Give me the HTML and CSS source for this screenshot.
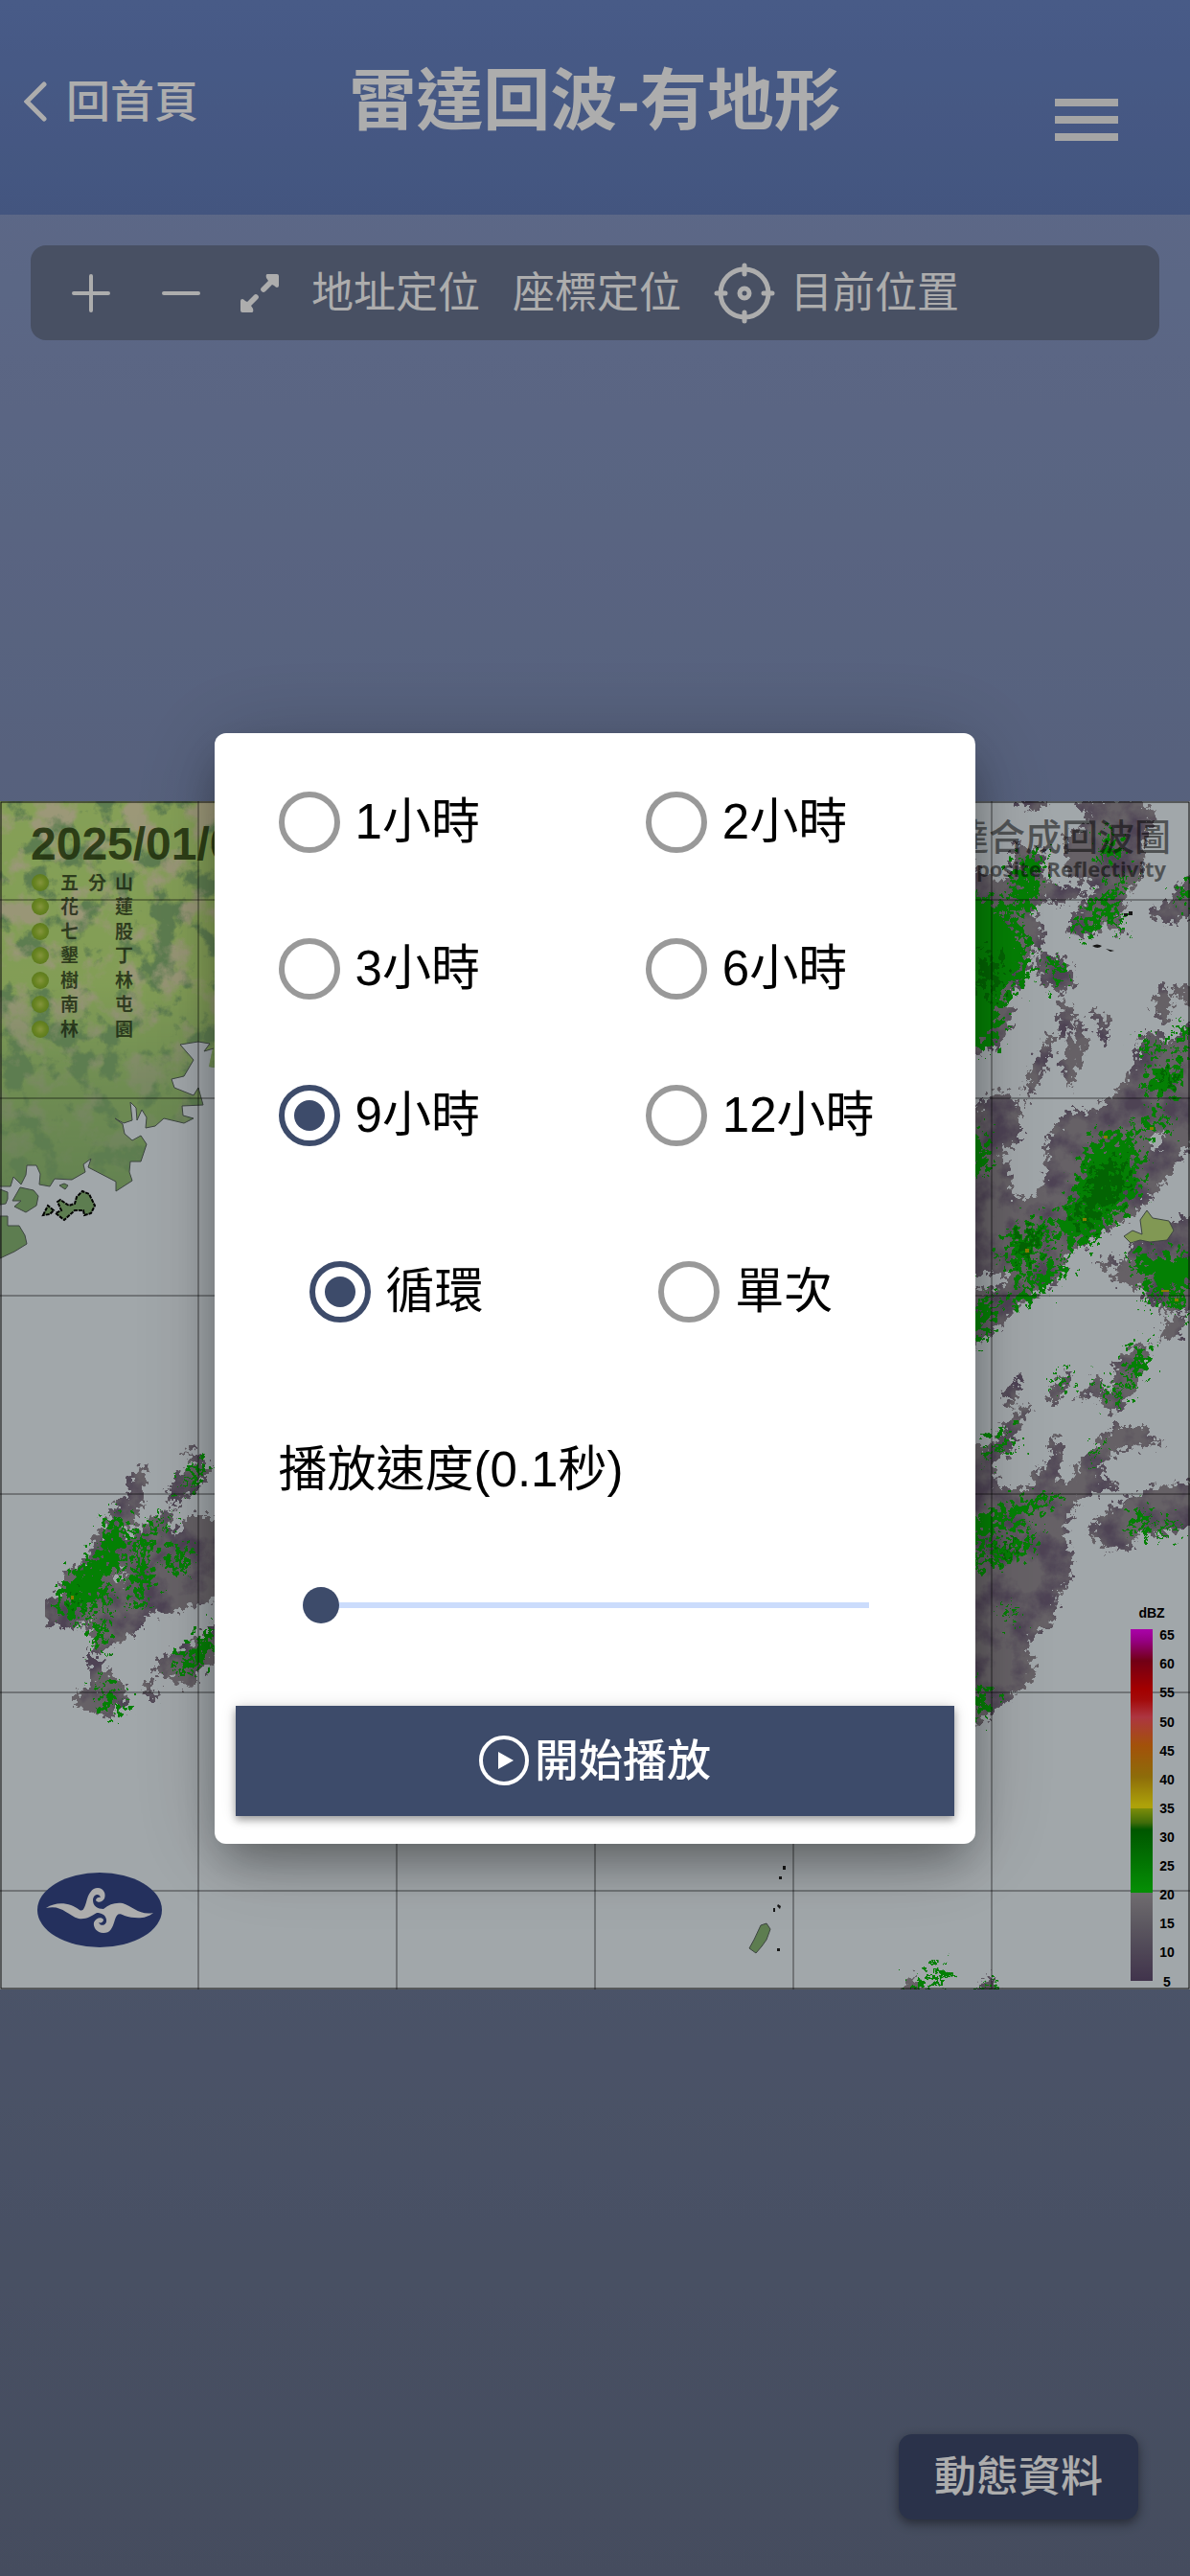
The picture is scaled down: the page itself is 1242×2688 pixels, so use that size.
FILE: index.html
```html
<!DOCTYPE html>
<html lang="zh-Hant">
<head>
<meta charset="utf-8">
<meta name="viewport" content="width=device-width, initial-scale=1">
<title>雷達回波-有地形</title>
<link rel="stylesheet" href="styles.css">
</head>
<body>
<div class="app">
  <header class="header">
    <a class="back" href="#">
      <svg class="back-icon" viewBox="0 0 24 42" aria-hidden="true"><path d="M21 3 3 21l18 18"/></svg>
      <span>回首頁</span>
    </a>
    <h1 class="title">雷達回波-有地形</h1>
    <button class="menu" type="button" aria-label="選單"><span></span><span></span><span></span></button>
  </header>

  <main class="main">
    <div class="toolbar">
      <button class="tool tool-zoom" type="button" aria-label="放大"><svg class="icon" viewBox="0 0 40 40"><path d="M2 20h36M20 2v36"/></svg></button>
      <button class="tool tool-zoom" type="button" aria-label="縮小"><svg class="icon" viewBox="0 0 40 40"><path d="M2 20h36"/></svg></button>
      <button class="tool tool-expand" type="button" aria-label="全圖">
        <svg class="icon icon-solid" viewBox="0 0 40 40"><path d="M28 0h10q2 0 2 2v10q0 2-2 2-1 0-3-2l-2-1-7 7q-2 2-4 0t0-4l7-7-2-3q-1-4 1-4zM12 40H2q-2 0-2-2V28q0-2 2-2 1 0 3 2l2 1 7-7q2-2 4 0t0 4l-7 7 2 3q1 4-1 4z"/></svg>
      </button>
      <button class="tool" type="button">地址定位</button>
      <button class="tool" type="button">座標定位</button>
      <button class="tool tool-locate" type="button">
        <svg class="icon-target" viewBox="0 0 64 64" aria-hidden="true"><circle cx="32" cy="32" r="25"/><circle cx="32" cy="32" r="5"/><path d="M32 3v9M32 52v9M3 32h9M52 32h9"/></svg>
        <span>目前位置</span>
      </button>
    </div>

    <svg class="map" viewBox="0 835 1242 1240" role="img" aria-label="雷達回波圖">
      <defs>
        <filter id="edge" x="-5%" y="-5%" width="110%" height="110%" color-interpolation-filters="sRGB">
          <feTurbulence type="fractalNoise" baseFrequency=".16" numOctaves="3" seed="4" result="n"/>
          <feDisplacementMap in="SourceGraphic" in2="n" scale="24" xChannelSelector="R" yChannelSelector="G"/>
        </filter>
        <filter id="speckle" x="-5%" y="-5%" width="110%" height="110%" color-interpolation-filters="sRGB">
          <feTurbulence type="fractalNoise" baseFrequency=".14" numOctaves="3" seed="9" result="n"/>
          <feDisplacementMap in="SourceGraphic" in2="n" scale="56" xChannelSelector="R" yChannelSelector="G"/>
        </filter>
        <filter id="shade" x="0" y="0" width="100%" height="100%" color-interpolation-filters="sRGB">
          <feTurbulence type="fractalNoise" baseFrequency=".035" numOctaves="5" seed="6"/>
          <feColorMatrix values="0 0 0 0 .45  0 0 0 0 .39  0 0 0 0 .49  3 0 0 0 -1.2" result="t"/>
          <feComposite in="t" in2="SourceGraphic" operator="in" result="c"/>
          <feMerge><feMergeNode in="SourceGraphic"/><feMergeNode in="c"/></feMerge>
        </filter>
        <filter id="hills" x="0" y="0" width="100%" height="100%" color-interpolation-filters="sRGB">
          <feTurbulence type="fractalNoise" baseFrequency=".032" numOctaves="6" seed="12"/>
          <feColorMatrix values="0 0 0 0 .77  0 0 0 0 .92  0 0 0 0 .5  8 0 0 0 -2.9"/>
        </filter>
        <filter id="peaks" x="0" y="0" width="100%" height="100%" color-interpolation-filters="sRGB">
          <feTurbulence type="fractalNoise" baseFrequency=".03" numOctaves="6" seed="31"/>
          <feColorMatrix values="0 0 0 0 .9  0 0 0 0 .88  0 0 0 0 .7  5 0 0 0 -2.5"/>
        </filter>
        <linearGradient id="fade" x1="0" y1="0" x2="0" y2="1">
          <stop offset="0" stop-color="#fff"/><stop offset=".45" stop-color="#eee"/><stop offset=".7" stop-color="#777"/><stop offset="1" stop-color="#222"/>
        </linearGradient>
        <mask id="height"><rect x="0" y="835" width="230" height="420" fill="url(#fade)"/></mask>
        <clipPath id="coast"><path d="M0 835H300V1113H222L218 1112 222 1093 213 1096 219 1088 207 1086 188 1089 202 1105 192 1122 179 1125 182 1134 202 1142 207 1134 212 1152 190 1153 191 1163 202 1166 192 1171 171 1166 162 1174 152 1176 153 1165 148 1157 143 1168 142 1155 136 1149 138 1168 129 1171 120 1166 128 1172 130 1182 138 1189 147 1184 153 1193 147 1211 136 1211 135 1222 138 1231 121 1242 121 1232 92 1217 95 1208 87 1214 89 1222 75 1230 57 1229 52 1237 41 1235 42 1224 38 1215 28 1215 27 1225 22 1235 14 1227 11 1237 0 1237Z"/></clipPath>
        <radialGradient id="station"><stop offset="0" stop-color="#c4dc5c"/><stop offset=".6" stop-color="#9cc434"/><stop offset="1" stop-color="#8ab62c"/></radialGradient>
        <linearGradient id="dbz" x1="0" y1="0" x2="0" y2="1">
          <stop offset="0" stop-color="#fb05fb"/><stop offset=".03" stop-color="#e000c8"/><stop offset=".09" stop-color="#a80020"/><stop offset=".17" stop-color="#f00000"/><stop offset=".2" stop-color="#f01010"/><stop offset=".25" stop-color="#ff5060"/><stop offset=".33" stop-color="#f07810"/><stop offset=".42" stop-color="#d0a010"/><stop offset=".5" stop-color="#ffee10"/><stop offset=".51" stop-color="#ffee10"/><stop offset=".51" stop-color="#b8d010"/><stop offset=".55" stop-color="#60a010"/><stop offset=".57" stop-color="#008000"/><stop offset=".75" stop-color="#08d408"/><stop offset=".75" stop-color="#a4a0a4"/><stop offset=".87" stop-color="#807888"/><stop offset="1" stop-color="#604c70"/>
        </linearGradient>
      </defs>

      <rect class="sea" x="0" y="835" width="1242" height="1240"/>

      <g clip-path="url(#coast)">
        <rect class="land" x="0" y="835" width="300" height="420"/>
        <g mask="url(#height)">
          <rect x="0" y="835" width="230" height="420" filter="url(#hills)"/>
          <rect x="0" y="835" width="230" height="420" filter="url(#peaks)"/>
        </g>
      </g>
      <path class="shore" d="M223 1093 213 1096 219 1088 207 1086 188 1089 202 1105 192 1122 179 1125 182 1134 202 1142 207 1134 212 1152 190 1153 191 1163 202 1166 192 1171 171 1166 162 1174 152 1176 153 1165 148 1157 143 1168 142 1155 136 1149 138 1168 129 1171 120 1166 128 1172 130 1182 138 1189 147 1184 153 1193 147 1211 136 1211 135 1222 138 1231 121 1242 121 1232 92 1217 95 1208 87 1214 89 1222 75 1230 57 1229 52 1237 41 1235 42 1224 38 1215 28 1215 27 1225 22 1235 14 1227 11 1237 0 1237"/>
      <path class="shore land" d="M0 1240l8 3v7l-2 5-6 1zM13 1252l8-14 14 3 5 6-2 10-11 7-12-6 7-6zM0 1268h8v10h12l6 10 2 9-13 8-15 7zM62 1236l5-2 4 2-3 4z"/>
      <path class="island land" d="M60 1253l3-2 9 6 6-2 2-7 6-6 7 3 6 12-4 8-7 2-1-5h-9l-11 10-9-7 6-3zM45 1267l5-10 6 5-4 4z"/>

      <g class="echo" filter="url(#shade)"><g filter="url(#edge)">
        <path d="M150 1533L138 1541 138 1559 125 1567 107 1600 88 1633 67 1644 67 1666 47 1670 48 1689 70 1696 95 1687 98 1713 103 1722 127 1708 143 1699 157 1675 173 1682 203 1670 240 1659V1584H197L177 1611 175 1595 177 1578 157 1585 133 1609 130 1623 137 1680 126 1651 113 1647 128 1628 127 1590 137 1588 147 1562Z"/>
        <path d="M195 1510L210 1522 200 1529 178 1552 180 1566 200 1555 213 1538 213 1524 205 1518ZM165 1732L200 1717 240 1685V1717L200 1743V1757L180 1750 165 1743ZM90 1725L108 1741 127 1760 128 1776 115 1786 83 1779V1765L100 1760 98 1739ZM152 1757h4l5 14h-4z"/>
        <path d="M1127 835L1187 835 1202 851 1190 877 1192 908 1180 923 1167 946 1168 969 1153 960 1140 973 1119 971 1122 958 1150 923 1117 912 1113 874 1143 858ZM1090 920L1127 931 1107 939 1087 933ZM1062 835h28l-8 8z"/>
        <path d="M1000 895L1043 923 1060 912V885L1085 889 1088 912 1087 935 1075 950 1088 977 1072 992 1068 1019 1050 1038 1053 1065 1040 1088 1000 1100ZM1085 996L1110 1002 1120 1019 1110 1032 1088 1023ZM1097 1080L1090 1111 1080 1130 1072 1145 1075 1122ZM1127 1070L1132 1088 1117 1126 1110 1107ZM1110 1045L1120 1061 1108 1082ZM1138 1054l16 8-2 24-4-18z"/>
        <path fill-rule="evenodd" d="M1000 1174L1043 1138 1063 1153V1184L1040 1203 1050 1218 1057 1252H1080L1093 1233 1097 1187 1117 1161H1143L1167 1141 1187 1111 1193 1080H1210L1217 1096 1260 1055V1172L1230 1203 1217 1226 1200 1245 1183 1264 1143 1287 1113 1306 1107 1329 1067 1356 1050 1371 1000 1420V1348L1053 1345V1325L1000 1325ZM1197 1180L1200 1198 1213 1206 1217 1177Z"/>
        <path d="M1260 1265L1217 1279 1187 1298 1163 1333 1190 1340 1200 1356 1230 1367 1260 1356ZM1233 1375L1230 1390 1212 1394 1220 1379ZM1260 900L1230 927 1227 939 1203 952 1220 960 1260 942ZM1213 1032L1222 1050 1213 1063 1207 1050ZM1260 1020L1225 1034 1260 1052ZM1150 1317l16-4-10 8z"/>
        <path d="M1050 1454L1062 1440 1060 1454 1056 1464ZM1115 1430L1112 1445 1096 1464 1100 1449ZM1130 1456L1147 1438 1153 1454ZM1198 1406L1185 1407 1165 1427 1167 1445 1152 1460 1162 1471 1178 1454 1190 1431Z"/>
        <path d="M1000 1500L1030 1516 1050 1490 1073 1465 1056 1496 1052 1514 1032 1523 1040 1554H1080L1082 1538 1100 1525 1099 1503 1106 1505 1103 1547 1117 1552 1127 1529 1163 1490H1193L1207 1504 1167 1508 1147 1525 1145 1538 1162 1550 1133 1556 1117 1570 1107 1596 1117 1623 1113 1650 1100 1663 1098 1690 1083 1699 1067 1712 1079 1744 1063 1762 1033 1784 1000 1812ZM1138 1596L1160 1576 1197 1556 1260 1545V1583L1220 1596 1187 1596 1180 1612 1157 1614Z"/>
        <path d="M942 2080l12-16 4 16zM1020 2080l12-16 8 16z"/>
      </g></g>

      <g class="rain" filter="url(#speckle)">
        <path d="M117 1580L107 1614 88 1634 66 1651 66 1680 80 1692 93 1670 119 1675 105 1655 130 1623 128 1590ZM177 1578L143 1604 147 1628 136 1661 147 1678 157 1647 152 1615ZM183 1607L197 1623 187 1645 178 1628ZM96 1692L112 1694 105 1718ZM101 1758L130 1774 115 1786ZM181 1738L203 1717 224 1695V1713L200 1743ZM205 1522L215 1529 200 1547 188 1557Z"/>
        <path d="M1177 912L1163 935 1168 969 1150 954 1133 973 1120 969 1150 937ZM1157 868L1170 889 1150 900ZM1000 930L1050 944 1072 988 1068 1019 1050 1034 1037 1090 1000 1090ZM1066 895L1084 891 1084 923 1072 952 1053 942ZM1090 1006l16 2 2 14-12-2z"/>
        <path d="M1153 1182L1185 1185 1189 1237 1167 1264 1127 1300 1101 1285 1123 1241 1133 1203ZM1060 1287L1090 1270 1095 1298 1067 1323 1045 1312ZM1112 1312L1107 1331 1058 1362 1063 1340ZM1037 1352L1033 1379 1000 1410V1370ZM1000 1170l30 20-4 30-26 20z"/>
        <path d="M1205 1113L1232 1109V1130L1213 1143 1195 1136ZM1181 1178L1213 1161 1222 1170 1195 1182ZM1176 1312L1260 1305V1329L1213 1350ZM1218 1350L1240 1350 1230 1370ZM1235 1068L1240 1090 1224 1094ZM1191 1088L1209 1082 1200 1102ZM1260 905L1230 935 1260 945ZM1190 1352h16l-8 8z"/>
        <path d="M1000 1590L1050 1574 1102 1560 1099 1572 1060 1585 1027 1607 1000 1612ZM1000 1640L1030 1619 1082 1601 1073 1621ZM1052 1492L1055 1507 1030 1522 1040 1500ZM1000 1750L1034 1770 1020 1790ZM1200 1406L1186 1408 1178 1432 1186 1434ZM1165 1446l12-4-8 20-8-4zM1115 1430L1112 1445 1102 1447ZM1185 1583L1200 1577 1194 1598 1182 1596ZM1205 1592L1230 1590 1216 1599ZM1146 1438l6 8-8 2zM1048 1680l8-6 0 14zM1140 1514l8 0-4 6z"/>
        <path d="M955 2080L968 2063 991 2050 978 2067 973 2080ZM1028 2080l4-12 8 12z"/>
      </g>
      <g class="heavy" filter="url(#speckle)">
        <path d="M1145 1215L1172 1210 1176 1236 1135 1280 1122 1272ZM1062 1292L1084 1280 1084 1298 1064 1312ZM1212 1118h14v12h-10zM1040 1616l26-8-10 12zM72 1668l12-4v16zM1026 990l20 10-10 40-14-10z"/>
      </g>
      <path class="storm" d="M1070 1302h4v4h-4zM1152 1184h4v3h-4zM1200 1175h4v3h-4zM1130 1270h4v3h-4zM1226 1354h4v3h-4zM1212 1345h8v2h-8zM74 1664h3v4h-3z"/>

      <path class="shore highland" d="M1173 1289l9-6 10 4-2-15 7-10 6 8 17 3 5 10-7 10-18 2-10-2-10 3z"/>
      <path class="shore land" d="M782 2032l5-9 7-15 6-2 4 6-4 11-5 7-6 7z"/>
      <path class="dots" d="M817 1946h3v4h-3zM813 1957h3v3h-3zM812 1986l3 2-1 3-3-3zM807 1990h2v4h-2zM811 2032h3v3h-3zM1173 952h4v3h-4zM1178 950h4v4h-4zM1140 986q5-3 10 0-4 4-10 0zM1154 989l9 2-4 1z"/>

      <path class="grid" d="M207 835V2075M414 835V2075M621 835V2075M828 835V2075M1035 835V2075M0 938H1242M0 1145H1242M0 1351H1242M0 1558H1242M0 1765H1242M0 1972H1242"/>

      <text class="map-date" x="32" y="896">2025/01/01</text>
      <g fill="url(#station)">
        <circle cx="42" cy="920" r="9"/><circle cx="42" cy="945" r="9"/><circle cx="42" cy="971" r="9"/><circle cx="42" cy="996" r="9"/><circle cx="42" cy="1022" r="9"/><circle cx="42" cy="1047" r="9"/><circle cx="42" cy="1073" r="9"/>
      </g>
      <g class="map-station">
        <text x="63" y="927">五</text><text x="92" y="927">分</text><text x="120" y="927">山</text>
        <text x="63" y="952">花</text><text x="120" y="952">蓮</text>
        <text x="63" y="978">七</text><text x="120" y="978">股</text>
        <text x="63" y="1003">墾</text><text x="120" y="1003">丁</text>
        <text x="63" y="1029">樹</text><text x="120" y="1029">林</text>
        <text x="63" y="1054">南</text><text x="120" y="1054">屯</text>
        <text x="63" y="1080">林</text><text x="120" y="1080">園</text>
      </g>
      <text class="map-title" x="1222" y="886">雷達合成回波圖</text>
      <text class="map-subtitle" x="1217" y="914">Composite Reflectivity</text>

      <g transform="translate(104 1992)">
        <ellipse class="logo" rx="65" ry="39"/>
        <path class="logo-wave" d="M-56-2C-44-10-30-7-21 0-17 2-16-2-14-8-12-17-8-23-2-23 4-23 7-17 5-12 3-8-2-7-4-10-4-13 0-14 1-13 0-18-7-17-7-10-7-4-2-1 4-1 10-6 16-8 24-7 34-4 42 6 56 3 48 10 36 9 26 6 20 3 18 4 16 10 13 20 11 24 4 24-3 24-7 18-6 13-4 8 2 7 4 10 4 13 1 14-1 13 1 18 8 16 7 10 6 5 2 3-3 3-10 7-14 10-22 9-34 5-40-6-56-2Z"/>
      </g>

      <rect x="1180" y="1699" width="23" height="367" fill="url(#dbz)"/>
      <g class="legend">
        <text x="1202" y="1687">dBZ</text>
        <text x="1218" y="1710">65</text><text x="1218" y="1740">60</text><text x="1218" y="1770">55</text><text x="1218" y="1801">50</text><text x="1218" y="1831">45</text><text x="1218" y="1861">40</text><text x="1218" y="1891">35</text><text x="1218" y="1921">30</text><text x="1218" y="1951">25</text><text x="1218" y="1981">20</text><text x="1218" y="2011">15</text><text x="1218" y="2041">10</text><text x="1218" y="2072">5</text>
      </g>
      <rect class="frame" x="1" y="836" width="1240" height="1238"/>
    </svg>

    <button class="dynamic" type="button">動態資料</button>
  </main>
</div>

<div class="backdrop">
  <form class="dialog" role="dialog" aria-label="播放設定">
    <div class="options options-hours" role="radiogroup" aria-label="時間">
      <label class="option"><input type="radio" name="hours" value="1"><span>1小時</span></label>
      <label class="option"><input type="radio" name="hours" value="2"><span>2小時</span></label>
      <label class="option"><input type="radio" name="hours" value="3"><span>3小時</span></label>
      <label class="option"><input type="radio" name="hours" value="6"><span>6小時</span></label>
      <label class="option"><input type="radio" name="hours" value="9" checked><span>9小時</span></label>
      <label class="option"><input type="radio" name="hours" value="12"><span>12小時</span></label>
    </div>
    <div class="options options-mode" role="radiogroup" aria-label="播放模式">
      <label class="option"><input type="radio" name="mode" value="loop" checked><span>循環</span></label>
      <label class="option"><input type="radio" name="mode" value="once"><span>單次</span></label>
    </div>
    <label class="speed-label" for="speed">播放速度(0.1秒)</label>
    <input class="speed" id="speed" type="range" min="1" max="10" value="1">
    <button class="play" type="button">
      <svg class="play-icon" viewBox="0 0 52 52" aria-hidden="true"><circle cx="26" cy="26" r="24"/><path d="M20 17v18l16-9z"/></svg>
      <span>開始播放</span>
    </button>
  </form>
</div>
</body>
</html>
```
FILE: styles.css
```css
* {
  box-sizing: border-box;
}

body {
  margin: 0;
  font-family: "Liberation Sans", "Noto Sans CJK TC", sans-serif;
  color: #000;
}

button,
input {
  margin: 0;
  padding: 0;
  border: 0;
  background: none;
  color: inherit;
  font: inherit;
}

.app {
  display: flex;
  flex-direction: column;
  min-height: 100vh;
  color: #fff;
  background: linear-gradient(#8b9dcc, #66718b);
}

/* Header */
.header {
  display: grid;
  grid-template-columns: 1fr auto 1fr;
  align-items: center;
  min-height: 224px;
  padding: 0 25px 12px;
  background: linear-gradient(#6a86c8, #647ebc);
}

.back {
  display: flex;
  align-items: center;
  gap: 20px;
  color: inherit;
  font-size: 46px;
  font-weight: 500;
  line-height: 64px;
  text-decoration: none;
}

.back-icon {
  width: 24px;
  height: 42px;
  fill: none;
  stroke: currentColor;
  stroke-width: 5;
  stroke-linecap: round;
}

.title {
  margin: 0;
  font-size: 70px;
  font-weight: 700;
  line-height: 96px;
}

.menu {
  display: flex;
  flex-direction: column;
  gap: 10px;
  justify-self: end;
  width: 66px;
  margin: 38px 50px 0 0;
}

.menu span {
  height: 8px;
  background: #f4f4f4;
}

/* Map area */
.main {
  flex: 1;
  display: grid;
  grid-template-rows: 1fr auto 1fr;
}

.toolbar {
  display: flex;
  align-items: center;
  align-self: start;
  gap: 34px;
  min-height: 99px;
  margin: 32px;
  padding: 0 16px;
  border-radius: 16px;
  background: #6a7692;
  font-size: 44px;
  line-height: 64px;
}

.tool-zoom {
  width: 94px;
  margin-right: -34px;
}

.tool-expand {
  margin-left: 15px;
}

.tool .icon {
  display: block;
  width: 40px;
  height: 40px;
  margin: 0 auto;
  fill: none;
  stroke: currentColor;
  stroke-width: 4;
  stroke-linecap: round;
}

.tool .icon-solid {
  fill: currentColor;
  stroke: none;
}

.tool-locate {
  display: flex;
  align-items: center;
  gap: 16px;
}

.icon-target {
  width: 64px;
  height: 64px;
  fill: none;
  stroke: currentColor;
  stroke-width: 5;
  stroke-linecap: round;
}

.map {
  display: block;
  width: 100%;
  height: auto;
}

.sea { fill: #eef6fb; }
.land { fill: #8ab876; }
.highland { fill: #bfe07c; }
.shore { stroke: #5a6660; stroke-width: 1; }
path.shore:not(.land):not(.highland) { fill: none; }
.island { stroke: #000; stroke-width: 2; stroke-dasharray: 4 1; }
.echo { fill: #979097; stroke: #979097; stroke-width: 6; }
.rain { fill: #07bd07; stroke: #07bd07; stroke-width: 2; }
.heavy { fill: #059405; }
.storm { fill: #c8b800; }
.dots { fill: #222; }
.grid { fill: none; stroke: #000; stroke-opacity: .6; stroke-width: 1; }
.frame { fill: none; stroke: #111; stroke-width: 1; }
.logo { fill: #35488a; }
.logo-wave { fill: #fff; }

.map-date {
  fill: #2c4310;
  fill-opacity: .85;
  font-size: 48px;
  font-weight: 700;
}

.map-station {
  fill: #1c2c10;
  fill-opacity: .75;
  font-size: 19px;
  font-weight: 700;
}

.map-title {
  fill: #000;
  fill-opacity: .5;
  font-size: 38px;
  font-weight: 500;
  text-anchor: end;
}

.map-subtitle {
  fill: #000;
  fill-opacity: .5;
  font-family: "Open Sans", sans-serif;
  font-size: 22px;
  font-weight: 700;
  text-anchor: end;
}

.legend {
  fill: #000;
  font-size: 14px;
  font-weight: 700;
  text-anchor: middle;
}

.dynamic {
  place-self: end;
  min-height: 89px;
  margin: 0 54px 59px 0;
  padding: 0 37px;
  border-radius: 14px;
  background: #3e4b6e;
  box-shadow: 0 4px 12px rgba(0, 0, 0, .45);
  font-size: 44px;
  font-weight: 500;
  line-height: 64px;
}

/* Playback dialog */
.backdrop {
  position: fixed;
  inset: 0;
  display: flex;
  align-items: center;
  justify-content: center;
  background: rgba(0, 0, 0, .32);
}

.dialog {
  display: flex;
  flex-direction: column;
  width: 64%;
  padding: 61px 22px 29px;
  border-radius: 12px;
  background: #fff;
  box-shadow: 0 24px 48px -8px rgba(0, 0, 0, .35), 0 8px 96px rgba(0, 0, 0, .2);
  font-size: 51px;
  line-height: 64px;
}

.options {
  display: grid;
  grid-template-columns: 58% 1fr;
  row-gap: 89px;
}

.options-hours {
  margin: 0 45px 120px;
}

.options-mode {
  margin: 0 45px 122px 77px;
}

.option {
  display: flex;
  align-items: center;
  gap: 16px;
  white-space: nowrap;
}

.option input {
  appearance: none;
  flex: none;
  width: 64px;
  height: 64px;
  padding: 10px;
  border: 6px solid #999;
  border-radius: 50%;
  background-clip: content-box;
}

.option input:checked {
  border-color: #3d4b6a;
  background-color: #3d4b6a;
}

.speed-label {
  margin: 0 45px 90px;
}

.speed {
  appearance: none;
  height: 38px;
  margin: 0 89px 86px 70px;
  background: linear-gradient(#cbdcfc, #cbdcfc) center / 100% 6px no-repeat;
}

.speed::-webkit-slider-thumb {
  appearance: none;
  width: 38px;
  height: 38px;
  border-radius: 50%;
  background: #3d4b6a;
}

.speed::-moz-range-thumb {
  width: 38px;
  height: 38px;
  border: 0;
  border-radius: 50%;
  background: #3d4b6a;
}

.play {
  display: flex;
  align-items: center;
  justify-content: center;
  gap: 6px;
  min-height: 115px;
  background: #3d4b6a;
  box-shadow: 0 4px 8px rgba(0, 0, 0, .35), 0 0 16px rgba(0, 0, 0, .12);
  color: #fff;
  font-size: 46px;
  font-weight: 500;
}

.play-icon {
  width: 52px;
  height: 52px;
  fill: none;
  stroke: currentColor;
  stroke-width: 4;
}

.play-icon path {
  fill: currentColor;
  stroke: none;
}
```
